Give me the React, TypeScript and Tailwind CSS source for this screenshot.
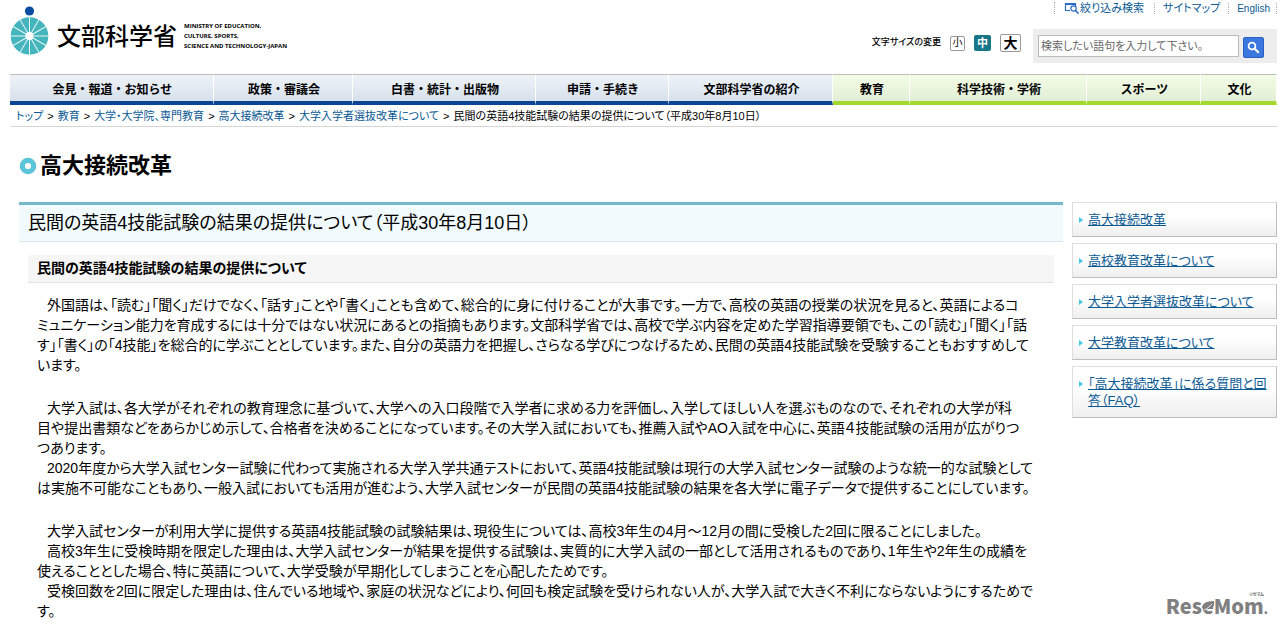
const JP = "font-['Liberation_Sans','Noto_Sans_CJK_JP',sans-serif]";

const nav = [
  { label: "会見・報道・お知らせ", green: false },
  { label: "政策・審議会", green: false },
  { label: "白書・統計・出版物", green: false },
  { label: "申請・手続き", green: false },
  { label: "文部科学省の紹介", green: false },
  { label: "教育", green: true },
  { label: "科学技術・学術", green: true },
  { label: "スポーツ", green: true },
  { label: "文化", green: true },
];

const crumbs = ["トップ", "教育", "大学・大学院、専門教育", "高大接続改革", "大学入学者選抜改革について"];

const side = [
  "高大接続改革",
  "高校教育改革について",
  "大学入学者選抜改革について",
  "大学教育改革について",
  "「高大接続改革」に係る質問と回答（FAQ）",
];

const blocks: string[][][] = [
  [
    [
      "外国語は、「読む」「聞く」だけでなく、「話す」ことや「書く」ことも含めて、総合的に身に付けることが大事です。一方で、高校の英語の授業の状況を見ると、英語によるコ",
      "ミュニケーション能力を育成するには十分ではない状況にあるとの指摘もあります。文部科学省では、高校で学ぶ内容を定めた学習指導要領でも、この「読む」「聞く」「話",
      "す」「書く」の「4技能」を総合的に学ぶこととしています。また、自分の英語力を把握し、さらなる学びにつなげるため、民間の英語4技能試験を受験することもおすすめして",
      "います。",
    ],
  ],
  [
    [
      "大学入試は、各大学がそれぞれの教育理念に基づいて、大学への入口段階で入学者に求める力を評価し、入学してほしい人を選ぶものなので、それぞれの大学が科",
      "目や提出書類などをあらかじめ示して、合格者を決めることになっています。その大学入試においても、推薦入試やAO入試を中心に、英語４技能試験の活用が広がりつ",
      "つあります。",
    ],
    [
      "2020年度から大学入試センター試験に代わって実施される大学入学共通テストにおいて、英語4技能試験は現行の大学入試センター試験のような統一的な試験として",
      "は実施不可能なこともあり、一般入試においても活用が進むよう、大学入試センターが民間の英語4技能試験の結果を各大学に電子データで提供することにしています。",
    ],
  ],
  [
    ["大学入試センターが利用大学に提供する英語4技能試験の試験結果は、現役生については、高校3年生の4月～12月の間に受検した2回に限ることにしました。"],
    [
      "高校3年生に受検時期を限定した理由は、大学入試センターが結果を提供する試験は、実質的に大学入試の一部として活用されるものであり、1年生や2年生の成績を",
      "使えることとした場合、特に英語について、大学受験が早期化してしまうことを心配したためです。",
    ],
    [
      "受検回数を2回に限定した理由は、住んでいる地域や、家庭の状況などにより、何回も検定試験を受けられない人が、大学入試で大きく不利にならないようにするためで",
      "す。",
    ],
  ],
];

function Emblem() {
  return (
    <svg width="40" height="52" viewBox="0 0 40 52" aria-hidden="true">
      <circle cx="19.5" cy="5" r="4.6" fill="#0b4da2" />
      <circle cx="19.5" cy="30" r="18.8" fill="#45b5bd" />
      {Array.from({ length: 12 }, (_, i) => (
        <line key={i} x1="19.5" y1="30" x2="19.5" y2="11" stroke="#e4f6f7" strokeWidth="1" transform={`rotate(${i * 30} 19.5 30)`} />
      ))}
      <circle cx="19.5" cy="30" r="4" fill="#fff" />
    </svg>
  );
}

export default function App() {
  return (
    <div className={`relative bg-white pb-2 pl-[10px] pr-[3px] text-black [font-feature-settings:'palt'] ${JP}`}>
      <header className="flex h-[74px] justify-between">
        <a href="#" className="flex items-start pt-[6px]">
          <Emblem />
          <span className="ml-[7px] mt-[13px] text-[24px] font-medium leading-[36px] [font-feature-settings:normal]">文部科学省</span>
          <span className="ml-[7px] mt-[15px] whitespace-nowrap font-['Open_Sans',sans-serif] text-[6px] font-bold leading-[10px]">
            MINISTRY OF EDUCATION,<br />CULTURE, SPORTS,<br />SCIENCE AND TECHNOLOGY-JAPAN
          </span>
        </a>
        <div className="flex flex-col items-end">
          <nav className="flex h-[16px] items-center text-[11px] text-[#0b5a94]">
            <a href="#" className="flex items-center border-l border-dotted border-[#aaa] pl-[9px] pr-[10px] leading-[11px]">
              <svg width="16" height="12" viewBox="0 0 16 12" fill="none" stroke="#2b6cc4" aria-hidden="true">
                <path d="M6 8.5H1.5V1.5H11.5V4" strokeWidth="1.2" />
                <path d="M1 2H12" strokeWidth="2" />
                <circle cx="9.5" cy="6.5" r="2.7" strokeWidth="1.2" />
                <path d="M11.5 8.5L14.5 11.5" strokeWidth="1.6" />
              </svg>
              絞り込み検索
            </a>
            <a href="#" className="border-l border-dotted border-[#aaa] px-[8px] leading-[11px]">サイトマップ</a>
            <a href="#" className="border-x border-dotted border-[#aaa] pl-[8px] pr-[6px] text-[10px] leading-[11px]">English</a>
          </nav>
          <div className="mt-[13px] flex items-start">
            <div className="mr-[12px] mt-[5px] flex items-center gap-[9px]">
              <span className="text-[9px] font-medium">文字サイズの変更</span>
              <button className="h-[15px] w-[15px] rounded-[2px] border border-[#999] text-[10px] leading-[12px]">小</button>
              <button className="h-[16px] w-[17px] rounded-[2px] bg-[#177687] text-[11px] font-bold leading-[15px] text-white">中</button>
              <button className="h-[18px] w-[21px] rounded-[2px] border border-[#999] text-[14px] font-bold leading-[15px]">大</button>
            </div>
            <form className="flex h-[34px] items-center bg-[#ededed] pl-[5px] pr-[13px]">
              <input
                aria-label="検索"
                placeholder="検索したい語句を入力して下さい。"
                className="h-[22px] w-[201px] border border-[#bbb] bg-white px-[2px] text-[11px] placeholder:text-[#666]"
              />
              <button type="button" aria-label="検索する" className="ml-[4px] mt-[2px] flex h-[21px] w-[21px] items-center justify-center rounded-[2px] border border-[#2a5fc4] bg-[#3a78e0]">
                <svg width="13" height="13" viewBox="0 0 13 13" fill="none" stroke="#fff" aria-hidden="true">
                  <circle cx="5" cy="5" r="3.4" strokeWidth="1.8" />
                  <path d="M7.7 7.7L11.8 11.8" strokeWidth="2.2" />
                </svg>
              </button>
            </form>
          </div>
        </div>
      </header>

      <nav className="grid grid-cols-[204fr_139fr_183fr_133fr_164fr_77fr_177fr_114fr_76fr]">
        {nav.map((n) => (
          <a
            key={n.label}
            href="#"
            className={`flex h-[31px] items-center justify-center whitespace-nowrap border-r border-t border-r-white border-t-[#bbb] pl-[2px] pt-[3px] text-[12px] font-bold [font-feature-settings:normal] ${
              n.green
                ? "border-b-4 border-b-[#a3d92f] bg-linear-to-b from-[#f3fde6] to-[#e3eed6]"
                : "border-b-4 border-b-[#0b4594] bg-linear-to-b from-[#eff3f8] to-[#d6e1ec]"
            }`}
          >
            {n.label}
          </a>
        ))}
      </nav>

      <nav className="flex h-[22px] items-center gap-[4px] whitespace-nowrap border-b border-[#d5d5d5] pl-[6px] pt-[2px] text-[11px]">
        {crumbs.map((c) => (
          <span key={c} className="flex gap-[4px]">
            <a href="#" className="text-[#0b5a94]">{c}</a>
            <span>&gt;</span>
          </span>
        ))}
        <span>民間の英語4技能試験の結果の提供について（平成30年8月10日）</span>
      </nav>

      <div className="mt-[23px] flex items-center gap-[3px] pl-[9px]">
        <svg width="18" height="18" viewBox="0 0 18 18" aria-hidden="true">
          <circle cx="9" cy="9" r="5.7" fill="none" stroke="#5bc5d9" strokeWidth="5.2" />
        </svg>
        <h2 className="text-[22px] font-bold leading-[32px]">高大接続改革</h2>
      </div>

      <div className="mt-[20px] flex items-start gap-[9px]">
        <main className="ml-[9px] min-w-0 flex-1">
          <h1 className="h-[40px] border-b border-t-3 border-b-[#dde6e8] border-t-[#74b9ca] bg-[#f1fafd] pl-[9px] text-[18px] leading-[37px]">
            民間の英語4技能試験の結果の提供について（平成30年8月10日）
          </h1>
          <h2 className="ml-[9px] mr-[9px] mt-[13px] h-[28px] border-b border-[#e2e2e2] bg-[#f6f6f6] pl-[9px] text-[14px] font-bold leading-[27px]">
            民間の英語4技能試験の結果の提供について
          </h2>
          <div className="ml-[18px] mt-[12px] flex flex-col gap-[23px] whitespace-nowrap text-[14px] leading-[20px]">
            {blocks.map((b, i) => (
              <div key={i}>
                {b.map((p, j) => (
                  <p key={j} className="indent-[10px]">
                    {p.map((l, k) => (
                      <span key={k}>
                        {k > 0 && <br />}
                        {l}
                      </span>
                    ))}
                  </p>
                ))}
              </div>
            ))}
          </div>
        </main>
        <aside className="w-[205px] shrink-0">
          <ul className="flex flex-col gap-[6px]">
            {side.map((s) => (
              <li key={s} className="flex items-start gap-[5px] border border-[#dedede] border-b-[#bdbdbd] border-r-[#bdbdbd] bg-linear-to-b from-white from-40% to-[#efefef] py-[8px] pl-[6px] pr-[8px] text-[13px] leading-[17px]">
                <svg width="4" height="17" viewBox="0 0 4 17" className="shrink-0" aria-hidden="true">
                  <path d="M0 6L4 9L0 12Z" fill="#45c8e8" />
                </svg>
                <a href="#" className="text-[#0b5a94] underline">{s}</a>
              </li>
            ))}
          </ul>
        </aside>
      </div>

      <div className="absolute right-[12px] top-[592px] flex flex-col items-end font-['Noto_Sans_CJK_JP',sans-serif] font-black text-[#808080]">
        <span className="mr-[4px] text-[4px] leading-[4px]">リセマム</span>
        <div className="text-[20px] leading-[20px]">
          Res
          <span className="relative">
            e
            <svg className="absolute bottom-[9px] left-0" width="13" height="10" viewBox="0 0 13 10" aria-hidden="true">
              <path d="M0 7C0 3 4 0 12 0C13 5 10 9 4 8Z" fill="#808080" />
              <path d="M2 9C5 8 7 6 10 3" stroke="#fff" strokeWidth="0.8" fill="none" />
            </svg>
          </span>
          Mom<span className="text-[12px]">.</span>
        </div>
      </div>
    </div>
  );
}
